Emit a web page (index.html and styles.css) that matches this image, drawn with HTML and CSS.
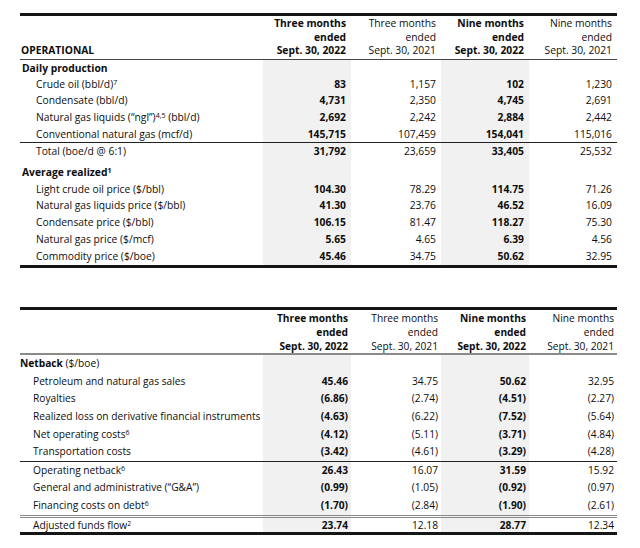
FILE: index.html
```html
<!DOCTYPE html>
<html>
<head>
<meta charset="utf-8">
<link rel="stylesheet" href="styles.css">
</head>
<body>
<div class="page">
  <table class="t t1">
    <colgroup>
      <col class="w-lab"><col class="w-c1"><col class="w-c2"><col class="w-c3"><col class="w-c4">
    </colgroup>
    <thead>
      <tr>
        <th class="lab">OPERATIONAL</th>
        <th class="num b">Three months<br>ended<br>Sept. 30, 2022</th>
        <th class="num">Three months<br>ended<br>Sept. 30, 2021</th>
        <th class="num b">Nine months<br>ended<br>Sept. 30, 2022</th>
        <th class="num">Nine months<br>ended<br>Sept. 30, 2021</th>
      </tr>
    </thead>
    <tbody>
      <tr class="first"><td class="sec">Daily production</td><td class="g"></td><td></td><td class="g"></td><td></td></tr>
      <tr><td class="ind">Crude oil (bbl/d)<sup>7</sup></td><td class="g b">83</td><td>1,157</td><td class="g b">102</td><td>1,230</td></tr>
      <tr><td class="ind">Condensate (bbl/d)</td><td class="g b">4,731</td><td>2,350</td><td class="g b">4,745</td><td>2,691</td></tr>
      <tr><td class="ind">Natural gas liquids (“ngl”)<sup>4,5</sup> (bbl/d)</td><td class="g b">2,692</td><td>2,242</td><td class="g b">2,884</td><td>2,442</td></tr>
      <tr><td class="ind">Conventional natural gas (mcf/d)</td><td class="g b">145,715</td><td>107,459</td><td class="g b">154,041</td><td>115,016</td></tr>
      <tr class="rule"><td class="ind">Total (boe/d @ 6:1)</td><td class="g b">31,792</td><td>23,659</td><td class="g b">33,405</td><td>25,532</td></tr>
      <tr class="gap"><td class="sec">Average realized<sup>1</sup></td><td class="g"></td><td></td><td class="g"></td><td></td></tr>
      <tr><td class="ind">Light crude oil price ($/bbl)</td><td class="g b">104.30</td><td>78.29</td><td class="g b">114.75</td><td>71.26</td></tr>
      <tr><td class="ind">Natural gas liquids price ($/bbl)</td><td class="g b">41.30</td><td>23.76</td><td class="g b">46.52</td><td>16.09</td></tr>
      <tr><td class="ind">Condensate price ($/bbl)</td><td class="g b">106.15</td><td>81.47</td><td class="g b">118.27</td><td>75.30</td></tr>
      <tr><td class="ind">Natural gas price ($/mcf)</td><td class="g b">5.65</td><td>4.65</td><td class="g b">6.39</td><td>4.56</td></tr>
      <tr class="last"><td class="ind">Commodity price ($/boe)</td><td class="g b">45.46</td><td>34.75</td><td class="g b">50.62</td><td>32.95</td></tr>
    </tbody>
  </table>

  <table class="t t2">
    <colgroup>
      <col class="w-lab"><col class="w-c1"><col class="w-c2"><col class="w-c3"><col class="w-c4">
    </colgroup>
    <thead>
      <tr>
        <th class="lab"></th>
        <th class="num b">Three months<br>ended<br>Sept. 30, 2022</th>
        <th class="num">Three months<br>ended<br>Sept. 30, 2021</th>
        <th class="num b">Nine months<br>ended<br>Sept. 30, 2022</th>
        <th class="num">Nine months<br>ended<br>Sept. 30, 2021</th>
      </tr>
    </thead>
    <tbody>
      <tr><td class="sec">Netback <span class="n">($/boe)</span></td><td class="g"></td><td></td><td class="g"></td><td></td></tr>
      <tr><td class="ind">Petroleum and natural gas sales</td><td class="g b">45.46</td><td>34.75</td><td class="g b">50.62</td><td>32.95</td></tr>
      <tr><td class="ind">Royalties</td><td class="g b">(6.86)</td><td>(2.74)</td><td class="g b">(4.51)</td><td>(2.27)</td></tr>
      <tr><td class="ind">Realized loss on derivative financial instruments</td><td class="g b">(4.63)</td><td>(6.22)</td><td class="g b">(7.52)</td><td>(5.64)</td></tr>
      <tr><td class="ind">Net operating costs<sup>6</sup></td><td class="g b">(4.12)</td><td>(5.11)</td><td class="g b">(3.71)</td><td>(4.84)</td></tr>
      <tr><td class="ind">Transportation costs</td><td class="g b">(3.42)</td><td>(4.61)</td><td class="g b">(3.29)</td><td>(4.28)</td></tr>
      <tr class="rule"><td class="ind">Operating netback<sup>6</sup></td><td class="g b">26.43</td><td>16.07</td><td class="g b">31.59</td><td>15.92</td></tr>
      <tr><td class="ind">General and administrative (“G&amp;A”)</td><td class="g b">(0.99)</td><td>(1.05)</td><td class="g b">(0.92)</td><td>(0.97)</td></tr>
      <tr><td class="ind">Financing costs on debt<sup>6</sup></td><td class="g b">(1.70)</td><td>(2.84)</td><td class="g b">(1.90)</td><td>(2.61)</td></tr>
      <tr class="dbl last"><td class="ind">Adjusted funds flow<sup>2</sup></td><td class="g b">23.74</td><td>12.18</td><td class="g b">28.77</td><td>12.34</td></tr>
    </tbody>
  </table>
</div>
</body>
</html>
```

FILE: styles.css
```css
html, body {
  margin: 0;
  padding: 0;
  background: #ffffff;
}
.page {
  padding: 13px 0 0 20px;
  font-family: "Open Sans", "Noto Sans", sans-serif;
  color: #0d0d0d;
}
.t {
  border-collapse: collapse;
  table-layout: fixed;
  width: 597px;
  border-top: 3px solid #151515;
  border-bottom: 3px solid #151515;
}
.w-lab { width: 243px; }
.w-c1 { width: 88px; }
.w-c2 { width: 90px; }
.w-c3 { width: 88px; }
.w-c4 { width: 88px; }

.t th, .t td {
  padding: 0 5px 0 0;
  text-align: right;
  white-space: nowrap;
  font-weight: 400;
}
.t th {
  vertical-align: bottom;
}
.t .lab, .t .sec, .t .ind {
  text-align: left;
}
.t .lab { padding-left: 1px; font-weight: 700; }
.t .sec { padding-left: 2px; font-weight: 700; }
.t .sec .n { font-weight: 400; }
.t .ind { padding-left: 16px; }
.t .b { font-weight: 700; }
.t .g { background: #f1f1f1; }
.t sup {
  font-size: 0.68em;
  line-height: 0;
  vertical-align: 0.5em;
}

/* table 1 */
.t1 { font-size: 10.3px; }
.t1 thead th {
  line-height: 13.5px;
  padding-top: 1px;
  padding-bottom: 1px;
  border-bottom: 1px solid #444;
}
.t1 td { line-height: 16.7px; height: 16.7px; }
.t1 tr.first td { line-height: 16px; height: 16px; }
.t1 tr.rule td { border-top: 1px solid #222; }
.t1 tr.gap td { padding-top: 4px; }
.t1 tr.last td { padding-bottom: 1px; }

/* table 2 */
.t2 {
  margin-top: 39px;
  font-size: 10.2px;
}
.t2 th, .t2 td { padding-right: 3px; }
.t2 .ind { padding-left: 13px; }
.t2 .sec { padding-left: 0; }
.t2 thead th {
  line-height: 14px;
  padding-top: 1px;
  padding-bottom: 0;
  border-bottom: 2px solid #8a8a8a;
}
.t2 td { line-height: 17.6px; height: 17.6px; }
.t2 tr.rule td { border-top: 1px solid #222; }
.t2 tr.dbl td {
  border-top: 3px double #8a8a8a;
  line-height: 14px;
  height: 14px;
}
```
